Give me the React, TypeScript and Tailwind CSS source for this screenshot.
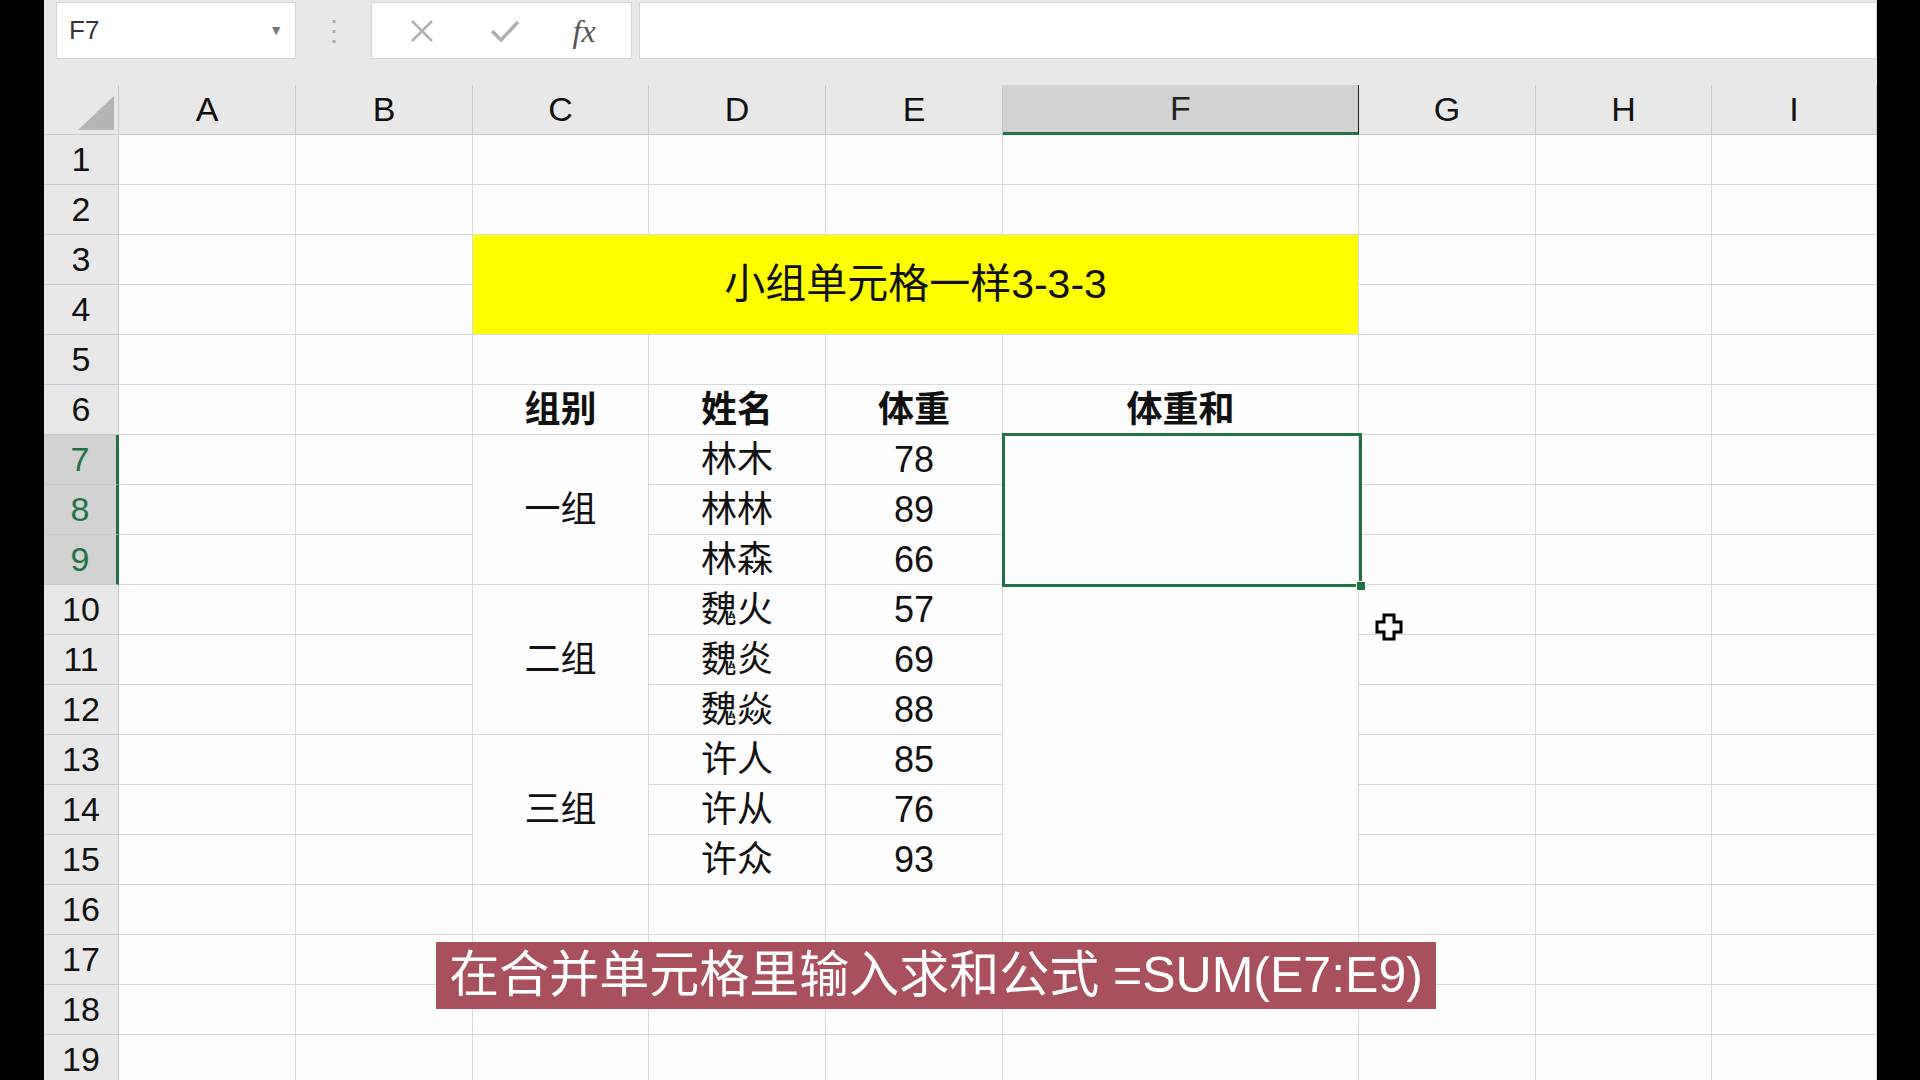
import React from "react";

const cols = ["A","B","C","D","E","F","G","H","I"];
const font = { fontFamily: '"Liberation Sans","Noto Sans CJK SC",sans-serif' };

type Cell = { r: number; c: number; rs?: number; cs?: number; text?: string; cls?: string };

const special: Cell[] = [
  { r: 3, c: 3, rs: 2, cs: 4, text: "小组单元格一样3-3-3", cls: "bg-[#ffff00] text-[41px]" },
  { r: 6, c: 3, text: "组别", cls: "font-bold text-[36px]" },
  { r: 6, c: 4, text: "姓名", cls: "font-bold text-[36px]" },
  { r: 6, c: 5, text: "体重", cls: "font-bold text-[36px]" },
  { r: 6, c: 6, text: "体重和", cls: "font-bold text-[36px]" },
  { r: 7, c: 3, rs: 3, text: "一组" },
  { r: 10, c: 3, rs: 3, text: "二组" },
  { r: 13, c: 3, rs: 3, text: "三组" },
  { r: 7, c: 6, rs: 3, text: "" },
  { r: 10, c: 6, rs: 6, text: "" },
];
const names = ["林木","林林","林森","魏火","魏炎","魏焱","许人","许从","许众"];
const weights = ["78","89","66","57","69","88","85","76","93"];
names.forEach((n, i) => {
  special.push({ r: 7 + i, c: 4, text: n });
  special.push({ r: 7 + i, c: 5, text: weights[i] });
});

export default function App() {
  const covered = new Set<string>();
  const cells: Cell[] = [];
  special.forEach((s) => {
    for (let r = s.r; r < s.r + (s.rs || 1); r++)
      for (let c = s.c; c < s.c + (s.cs || 1); c++) covered.add(r + "," + c);
    cells.push(s);
  });
  for (let r = 1; r <= 19; r++)
    for (let c = 1; c <= 9; c++) if (!covered.has(r + "," + c)) cells.push({ r, c });

  return (
    <div className="w-[1920px] h-[1080px] bg-black flex overflow-hidden text-[#111]" style={font}>
      <div className="w-[44px]" />
      <div className="w-[1833px] h-full bg-[#fdfdfd] flex flex-col relative overflow-hidden">
        <div className="h-[61px] shrink-0 bg-[#e8e8e8] flex items-start pt-[2px] pl-[12px]">
          <div className="w-[240px] h-[57px] bg-white border border-[#d4d4d4] flex items-center justify-between px-[12px] text-[26px] text-[#333]">
            <span>F7</span>
            <span className="text-[14px] text-[#777]">▼</span>
          </div>
          <div className="w-[75px] h-[57px] flex items-center justify-center text-[#aaa] text-[28px]">⋮</div>
          <div className="w-[261px] h-[57px] bg-white border border-[#d4d4d4] flex items-center justify-around px-[10px]">
            <svg width="30" height="30" viewBox="0 0 30 30"><path d="M5 5L25 25M25 5L5 25" stroke="#b0b0b0" strokeWidth="2.5" /></svg>
            <svg width="34" height="30" viewBox="0 0 34 30"><path d="M4 15L13 24L30 6" stroke="#b0b0b0" strokeWidth="3.5" fill="none" /></svg>
            <span className="italic text-[32px] text-[#555]" style={{ fontFamily: '"Liberation Serif",serif' }}>fx</span>
          </div>
          <div className="flex-1 h-[57px] bg-white border border-[#d4d4d4] ml-[7px]" />
        </div>
        <div className="h-[24px] shrink-0 bg-[#e8e8e8]" />
        <div
          className="grid shrink-0 bg-[#fdfdfd]"
          style={{ gridTemplateColumns: "75px 177px 177px 176px 177px 177px 356px 177px 176px 165px", gridTemplateRows: "50px repeat(19, 50px)" }}
        >
          <div className="bg-[#e8e8e8] border-r border-b border-[#c8c8d0] flex items-end justify-end p-[4px]" style={{ gridRow: 1, gridColumn: 1 }}>
            <svg width="36" height="34" viewBox="0 0 36 34"><path d="M36 0V34H0Z" fill="#b5b5b5" /></svg>
          </div>
          {cols.map((c, i) => (
            <div
              key={c}
              className={`flex items-center justify-center text-[34px] border-r border-b ${c === "F" ? "bg-[#d2d2d2] border-b-[3px] border-b-[#217346] text-[#222]" : "bg-[#e8e8e8] border-[#c8c8d0]"}`}
              style={{ gridRow: 1, gridColumn: i + 2 }}
            >
              {c}
            </div>
          ))}
          {Array.from({ length: 19 }, (_, i) => i + 1).map((r) => {
            const sel = r >= 7 && r <= 9;
            return (
              <div
                key={r}
                className={`flex items-center justify-center text-[34px] border-b border-[#c8c8d0] ${sel ? "bg-[#d2d2d2] text-[#217346] border-r-[3px] border-r-[#217346]" : "bg-[#e8e8e8] border-r"}`}
                style={{ gridRow: r + 1, gridColumn: 1 }}
              >
                {r}
              </div>
            );
          })}
          {cells.map((s) => (
            <div
              key={s.r + "-" + s.c}
              className={`border-r border-b border-[#d9d9d9] flex items-center justify-center text-[36px] ${s.cls || ""}`}
              style={{ gridRow: `${s.r + 1} / span ${s.rs || 1}`, gridColumn: `${s.c + 1} / span ${s.cs || 1}` }}
            >
              {s.text}
            </div>
          ))}
        </div>
        {/* selection */}
        <div className="absolute left-[958px] top-[433px] w-[360px] h-[154px] border-[3px] border-[#217346]" />
        <div className="absolute left-[1312px] top-[581px] w-[10px] h-[10px] bg-[#217346] border border-white" />
        {/* cursor */}
        <svg className="absolute left-[1330px] top-[612px]" width="30" height="30" viewBox="0 0 30 30">
          <path d="M10 3H20V10H27V20H20V27H10V20H3V10H10Z" fill="white" stroke="black" strokeWidth="3" />
        </svg>
        {/* subtitle */}
        <div className="absolute left-[392px] top-[942px] w-[1000px] h-[67px] bg-[#a8505c] text-white text-[50px] flex items-center justify-center whitespace-nowrap">
          在合并单元格里输入求和公式 =SUM(E7:E9)
        </div>
      </div>
    </div>
  );
}
